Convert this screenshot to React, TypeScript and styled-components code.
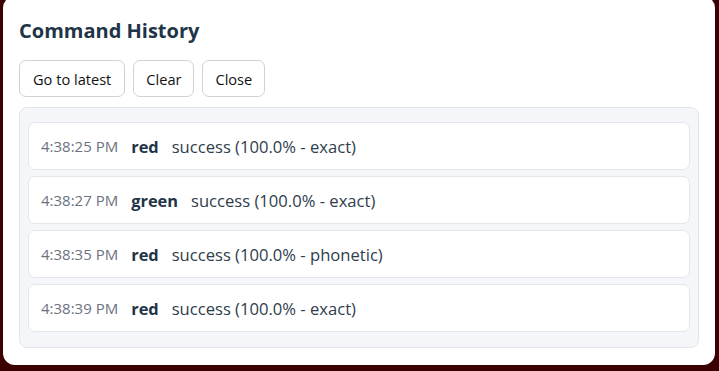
import styled, { createGlobalStyle } from "styled-components";

const GlobalStyle = createGlobalStyle`
  html, body {
    margin: 0;
    background: #3b0000;
    font-family: "Open Sans", "Noto Sans", sans-serif;
  }
`;

type Entry = {
  time: string;
  color: string;
  result: string;
};

const entries: Entry[] = [
  { time: "4:38:25 PM", color: "red", result: "success (100.0% - exact)" },
  { time: "4:38:27 PM", color: "green", result: "success (100.0% - exact)" },
  { time: "4:38:35 PM", color: "red", result: "success (100.0% - phonetic)" },
  { time: "4:38:39 PM", color: "red", result: "success (100.0% - exact)" },
];

const Page = styled.div`
  padding: 0 4px 6px 3px;
`;

const Modal = styled.div`
  background: #ffffff;
  border-radius: 12px;
  margin-top: -4px;
  padding: 21px 16px 16px 16px;
  height: 332px;
  display: flex;
  flex-direction: column;
`;

const Title = styled.h2`
  margin: 0;
  font-size: 20px;
  font-weight: 700;
  color: #1e3447;
  line-height: 27px;
`;

const Toolbar = styled.div`
  display: flex;
  gap: 8px;
  margin-top: 16px;
`;

const Button = styled.button<{ $wide?: boolean }>`
  font-family: inherit;
  font-size: 14.6px;
  font-weight: 500;
  color: #111;
  background: #fff;
  border: 1px solid #cfd2d8;
  border-radius: 7px;
  height: 37px;
  padding: 0 ${(p) => (p.$wide ? 13 : 12)}px;
  cursor: pointer;
`;

const List = styled.div`
  margin-top: 10px;
  background: #f5f6f9;
  border: 1px solid #e2e5eb;
  border-radius: 8px;
  padding: 14px 8px 15px 8px;
  display: flex;
  flex-direction: column;
  gap: 6px;
`;

const Row = styled.div`
  background: #ffffff;
  border: 1px solid #e3e6eb;
  border-radius: 7px;
  height: 46px;
  padding: 0 12px;
  display: flex;
  align-items: center;
  gap: 13px;
`;

const Time = styled.span`
  font-size: 15px;
  color: #6b7280;
`;

const Name = styled.span`
  font-size: 16.4px;
  font-weight: 700;
  color: #1e3447;
`;

const Result = styled.span`
  font-size: 16.6px;
  color: #2f3d4c;
`;

export default function App() {
  return (
    <Page>
      <GlobalStyle />
      <Modal>
        <Title>Command History</Title>
        <Toolbar>
          <Button $wide>Go to latest</Button>
          <Button>Clear</Button>
          <Button>Close</Button>
        </Toolbar>
        <List>
          {entries.map((e, i) => (
            <Row key={i}>
              <Time>{e.time}</Time>
              <Name>{e.color}</Name>
              <Result>{e.result}</Result>
            </Row>
          ))}
        </List>
      </Modal>
    </Page>
  );
}
